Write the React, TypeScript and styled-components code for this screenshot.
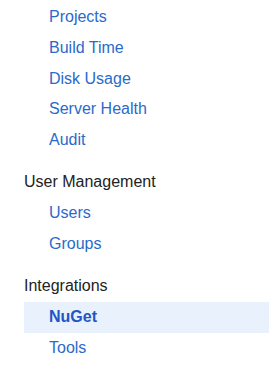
import styled, { createGlobalStyle } from 'styled-components';

const GlobalStyle = createGlobalStyle`
  body {
    margin: 0;
    background: #fff;
    font-family: Arial, "Liberation Sans", sans-serif;
  }
`;

const Nav = styled.nav`
  padding-top: 2.4px;
  width: 269px;
`;

const Section = styled.section`
  & + & {
    margin-top: 16px;
  }
`;

const SectionTitle = styled.h3`
  margin: 0 0 4.5px;
  padding-left: 24px;
  font-size: 16px;
  font-weight: 400;
  line-height: 22.4px;
  color: #222;
`;

const List = styled.ul`
  list-style: none;
  margin: 0;
  padding: 0;
`;

const Item = styled.li<{ $active?: boolean }>`
  margin-left: 24px;
  padding: 4px 0 4px 25px;
  font-size: 16px;
  line-height: 22.6px;
  background: ${(p) => (p.$active ? '#e8f1fc' : 'transparent')};

  a {
    color: ${(p) => (p.$active ? '#2356c4' : '#2a6acb')};
    font-weight: ${(p) => (p.$active ? 700 : 400)};
    text-decoration: none;
  }
`;

interface NavSection {
  title?: string;
  items: string[];
}

const sections: NavSection[] = [
  { items: ['Projects', 'Build Time', 'Disk Usage', 'Server Health', 'Audit'] },
  { title: 'User Management', items: ['Users', 'Groups'] },
  { title: 'Integrations', items: ['NuGet', 'Tools'] },
];

const activeItem = 'NuGet';

export default function App() {
  return (
    <>
      <GlobalStyle />
      <Nav>
        {sections.map((section, i) => (
          <Section key={i}>
            {section.title && <SectionTitle>{section.title}</SectionTitle>}
            <List>
              {section.items.map((item) => (
                <Item key={item} $active={item === activeItem}>
                  <a href="#">{item}</a>
                </Item>
              ))}
            </List>
          </Section>
        ))}
      </Nav>
    </>
  );
}
